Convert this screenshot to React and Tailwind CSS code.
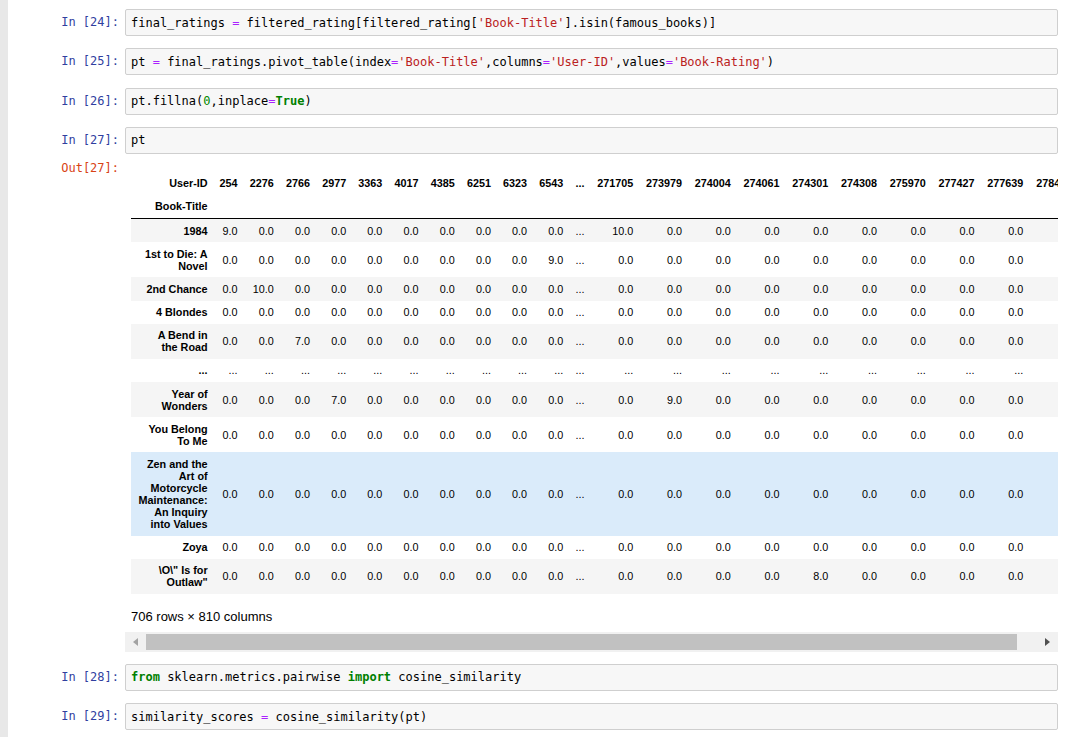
const MONO = "font-['DejaVu_Sans_Mono',monospace]"

const COLS = ['254', '2276', '2766', '2977', '3363', '4017', '4385', '6251', '6323', '6543', '...',
  '271705', '273979', '274004', '274061', '274301', '274308', '275970', '277427', '277639', '278418']

const WIDTHS = ['w-[82px]', 'w-[30px]',
  'w-[36.2px]', 'w-[36.2px]', 'w-[36.2px]', 'w-[36.2px]', 'w-[36.2px]', 'w-[36.2px]', 'w-[36.2px]', 'w-[36.2px]', 'w-[36.2px]',
  'w-[21.3px]',
  'w-[48.75px]', 'w-[48.75px]', 'w-[48.75px]', 'w-[48.75px]', 'w-[48.75px]', 'w-[48.75px]', 'w-[48.75px]', 'w-[48.75px]', 'w-[48.75px]', 'w-[48.75px]']

const ROWS = [
  { title: ['1984'], vals: { 0: '9.0', 11: '10.0' } },
  { title: ['1st to Die: A', 'Novel'], vals: { 9: '9.0' } },
  { title: ['2nd Chance'], vals: { 1: '10.0' } },
  { title: ['4 Blondes'], vals: {} },
  { title: ['A Bend in', 'the Road'], vals: { 2: '7.0' } },
  { title: ['...'], dots: true },
  { title: ['Year of', 'Wonders'], vals: { 3: '7.0', 12: '9.0' } },
  { title: ['You Belong', 'To Me'], vals: {} },
  { title: ['Zen and the', 'Art of', 'Motorcycle', 'Maintenance:', 'An Inquiry', 'into Values'], vals: {}, hover: true },
  { title: ['Zoya'], vals: {} },
  { title: ['\\O\\" Is for', 'Outlaw"'], vals: { 15: '8.0' } },
]

const Op = () => <span className="text-[#AA22FF]">=</span>
const Str = ({ children }) => <span className="text-[#BA2121]">{children}</span>
const Kw = ({ children }) => <span className="text-[#008000] font-bold">{children}</span>

function CodeCell({ n, children }) {
  return (
    <div className={`flex h-[27px] ${MONO} text-[12px]`}>
      <div className="w-[117px] shrink-0 pr-[6px] text-right leading-[27px] text-[#303F9F]">In [{n}]:</div>
      <div className="flex-1 min-w-0 mr-[19px] flex items-center border border-[#cfcfcf] rounded-[2px] bg-[#f7f7f7] pl-[5px] whitespace-pre text-black">
        {children}
      </div>
    </div>
  )
}

function Frame() {
  const cell = 'px-[5.4px] py-[5.6px] text-right align-middle'
  // the last column sits past the clip edge; only its header peeks in
  const value = (r, j) => {
    if (j === COLS.length - 1) return ''
    if (r.dots || j === 10) return '...'
    return r.vals[j] ?? '0.0'
  }
  return (
    <table className="table-fixed border-separate border-spacing-0 w-[946.6px] text-[10.8px] leading-[12px] text-black font-['Liberation_Sans',Arial,sans-serif]">
      <colgroup>
        {WIDTHS.map((w, i) => <col key={i} className={w} />)}
      </colgroup>
      <thead>
        <tr>
          <th className={`${cell} font-bold`}>User-ID</th>
          {COLS.map(c => <th key={c} className={`${cell} font-bold whitespace-nowrap`}>{c}</th>)}
        </tr>
        <tr>
          <th className={`${cell} font-bold border-b border-black`}>Book-Title</th>
          {COLS.map(c => <th key={c} className={`${cell} border-b border-black`}></th>)}
        </tr>
      </thead>
      <tbody>
        {ROWS.map((r, i) => (
          <tr key={i} className={r.hover ? 'bg-[#daebfa]' : i % 2 === 0 ? 'bg-[#f5f5f5]' : ''}>
            <th className={`${cell} font-bold`}>
              {r.title.map((l, j) => <div key={j} className="whitespace-nowrap">{l}</div>)}
            </th>
            {COLS.map((c, j) => (
              <td key={c} className={`${cell} font-normal whitespace-nowrap`}>{value(r, j)}</td>
            ))}
          </tr>
        ))}
      </tbody>
    </table>
  )
}

function Scrollbar() {
  return (
    <div className="h-[20px] bg-[#f1f1f1] flex items-center">
      <div className="w-[21px] h-full flex items-center justify-center">
        <svg width="5" height="8" viewBox="0 0 5 8"><polygon points="5,0 0,4 5,8" fill="#a3a3a3" /></svg>
      </div>
      <div className="w-[871px] h-[16px] bg-[#c1c1c1]" />
      <div className="flex-1" />
      <div className="w-[21px] h-full flex items-center justify-center">
        <svg width="5" height="8" viewBox="0 0 5 8"><polygon points="0,0 5,4 0,8" fill="#505050" /></svg>
      </div>
    </div>
  )
}

export default function App() {
  return (
    <div className="flex min-h-[737px] bg-white overflow-hidden">
      <div className="w-[8px] shrink-0 bg-[#e8e8e8]" />
      <div className="flex-1 min-w-0 pt-[9px] flex flex-col">
        <div className="flex flex-col gap-[12.3px]">
          <CodeCell n={24}>
            final_ratings <Op /> filtered_rating[filtered_rating[<Str>'Book-Title'</Str>].isin(famous_books)]
          </CodeCell>
          <CodeCell n={25}>
            pt <Op /> final_ratings.pivot_table(index<Op /><Str>'Book-Title'</Str>,columns<Op /><Str>'User-ID'</Str>,values<Op /><Str>'Book-Rating'</Str>)
          </CodeCell>
          <CodeCell n={26}>
            pt.fillna(<span className="text-[#008800]">0</span>,inplace<Op /><Kw>True</Kw>)
          </CodeCell>
          <CodeCell n={27}>pt</CodeCell>
        </div>

        <div className="flex">
          <div className={`w-[117px] shrink-0 pr-[6px] pt-[7px] text-right text-[12px] leading-[14px] text-[#D84315] ${MONO}`}>Out[27]:</div>
          <div className="flex-1 min-w-0 mr-[19px] pt-[17.7px] flex flex-col">
            <div className="overflow-hidden pl-[6px]">
              <Frame />
              <p className="mt-[15px] text-[13px] leading-[15px] text-black font-['Liberation_Sans',Arial,sans-serif]">706 rows × 810 columns</p>
            </div>
            <div className="mt-[7.8px]">
              <Scrollbar />
            </div>
          </div>
        </div>

        <div className="mt-[12px] flex flex-col gap-[12.3px]">
          <CodeCell n={28}>
            <Kw>from</Kw> sklearn.metrics.pairwise <Kw>import</Kw> cosine_similarity
          </CodeCell>
          <CodeCell n={29}>
            similarity_scores <Op /> cosine_similarity(pt)
          </CodeCell>
        </div>
      </div>
    </div>
  )
}
